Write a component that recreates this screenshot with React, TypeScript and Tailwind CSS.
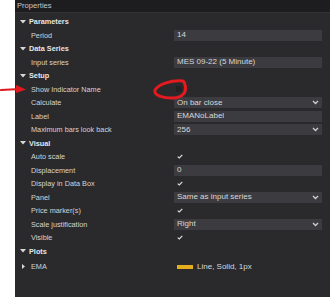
import React from 'react';

type Row =
  | { kind: 'section'; label: string }
  | { kind: 'text'; label: string; value: string }
  | { kind: 'select'; label: string; value: string }
  | { kind: 'check'; label: string; checked: boolean }
  | { kind: 'plot'; label: string; value: string };

const rows: Row[] = [
  { kind: 'section', label: 'Parameters' },
  { kind: 'text', label: 'Period', value: '14' },
  { kind: 'section', label: 'Data Series' },
  { kind: 'text', label: 'Input series', value: 'MES 09-22 (5 Minute)' },
  { kind: 'section', label: 'Setup' },
  { kind: 'check', label: 'Show Indicator Name', checked: false },
  { kind: 'select', label: 'Calculate', value: 'On bar close' },
  { kind: 'text', label: 'Label', value: 'EMANoLabel' },
  { kind: 'select', label: 'Maximum bars look back', value: '256' },
  { kind: 'section', label: 'Visual' },
  { kind: 'check', label: 'Auto scale', checked: true },
  { kind: 'text', label: 'Displacement', value: '0' },
  { kind: 'check', label: 'Display in Data Box', checked: true },
  { kind: 'select', label: 'Panel', value: 'Same as input series' },
  { kind: 'check', label: 'Price marker(s)', checked: true },
  { kind: 'select', label: 'Scale justification', value: 'Right' },
  { kind: 'check', label: 'Visible', checked: true },
  { kind: 'section', label: 'Plots' },
  { kind: 'plot', label: 'EMA', value: 'Line, Solid, 1px' },
];

const Chevron = () => (
  <svg width="7" height="5" viewBox="0 0 7 5" className="mr-[3px]">
    <path d="M1 1 L3.5 3.5 L6 1" fill="none" stroke="#d0d0d0" strokeWidth="1.3" />
  </svg>
);

const Check = () => (
  <svg width="6" height="5" viewBox="0 0 6 5" className="ml-[3px]">
    <path d="M0.7 2.6 L2.3 4 L5.3 0.8" fill="none" stroke="#e0e0e0" strokeWidth="1.1" />
  </svg>
);

const RowView: React.FC<{ row: Row }> = ({ row }) => {
  if (row.kind === 'section') {
    return (
      <div className="flex items-center h-[13.5px] pl-[5px] text-[#e6e6e6] font-bold text-[7.3px]">
        <svg width="6" height="4" viewBox="0 0 6 4" className="mr-[3px]">
          <path d="M0 0 L6 0 L3 3.5 Z" fill="#d8d8d8" />
        </svg>
        <span>{row.label}</span>
      </div>
    );
  }
  if (row.kind === 'plot') {
    return (
      <div className="flex items-center h-[13.5px] mt-[2px]">
        <div className="w-[159px] flex items-center pl-[7px] text-[#d4d4d4] text-[7.3px]">
          <svg width="3" height="5" viewBox="0 0 3 5" className="mr-[6px]">
            <path d="M0 0 L3 2.5 L0 5 Z" fill="#d8d8d8" />
          </svg>
          <span>{row.label}</span>
        </div>
        <div className="flex items-center pl-[3px]">
          <div className="w-[16px] h-[4px] bg-[#e6ad1e] mr-[4px]" />
          <span className="text-[#d8d8d8]">{row.value}</span>
        </div>
      </div>
    );
  }
  return (
    <div className="flex items-center h-[13.5px]">
      <div className="w-[159px] pl-[16px] text-[#d4d4d4] whitespace-nowrap text-[7.3px]">{row.label}</div>
      <div className="flex-1 mr-[8px] h-full flex items-center">
        {row.kind === 'check' ? (
          row.checked ? <Check /> : <div className="ml-[2px] w-[6px] h-[6px] bg-[#222224]" />
        ) : (
          <div className="w-full h-[11px] bg-[#3b3b40] flex items-center justify-between pl-[3px] text-[#d8d8d8]">
            <span>{row.value}</span>
            {row.kind === 'select' && <Chevron />}
          </div>
        )}
      </div>
    </div>
  );
};

export default function App() {
  return (
    <div
      className="relative w-[330px] h-[297px] bg-white flex overflow-hidden text-[8px] leading-none"
      style={{ fontFamily: '"Liberation Sans", Arial, sans-serif' }}
    >
      <div className="w-[15px]" />
      <div className="flex-1 flex flex-col bg-[#2a2a2c]">
        <div className="h-[13px] bg-[#1d1d1f] flex items-center pl-[2px] text-[#c8c8c8] text-[7.6px] border-b border-[#333336]">
          Properties
        </div>
        <div className="pt-[2px] flex flex-col">
          {rows.map((r, i) => (
            <RowView key={i} row={r} />
          ))}
        </div>
      </div>
      <svg
        className="absolute left-0 top-0 pointer-events-none"
        width="330"
        height="297"
        viewBox="0 0 330 297"
      >
        <path d="M1 90 L20 89" stroke="#e0191e" strokeWidth="2.2" strokeLinecap="round" />
        <path d="M16 85 L26 89.5 L16 93 Z" fill="#e0191e" />
        <path
          d="M183 81 C171 80 159 84 155 90 C153 95 163 98.5 174 98 C182 97.5 186 93 185.5 87 C185 83.5 184.5 82 183 81 Z"
          fill="none"
          stroke="#e31a1f"
          strokeWidth="3"
          strokeLinejoin="round"
        />
      </svg>
    </div>
  );
}
